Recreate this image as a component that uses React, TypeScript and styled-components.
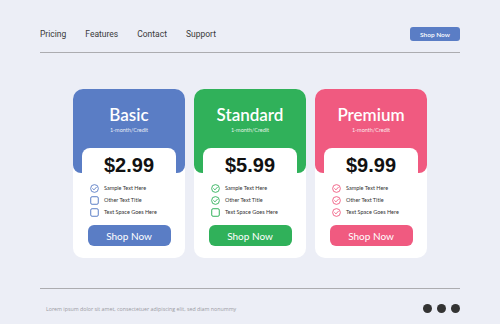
import React from "react";
import styled, { createGlobalStyle } from "styled-components";

const GlobalStyle = createGlobalStyle`
  body {
    margin: 0;
    background: #eceef6;
    font-family: "Liberation Sans", Arial, sans-serif;
  }
`;

const Page = styled.div`
  width: 420px;
  margin: 0 auto;
  padding-top: 27px;
  height: 324px;
  box-sizing: border-box;
`;

const Nav = styled.div`
  display: flex;
  align-items: center;
  justify-content: space-between;
  height: 14px;
`;

const Menu = styled.div`
  display: flex;
  gap: 19px;
`;

const MenuLink = styled.span`
  font-family: Roboto, sans-serif;
  font-size: 8.5px;
  color: #3a3a3a;
`;

const SmallButton = styled.div`
  width: 50px;
  height: 14px;
  background: #5a7dc5;
  border-radius: 3px;
  color: #fff;
  font-family: Lato, sans-serif;
  font-size: 6.5px;
  font-weight: 600;
  display: flex;
  align-items: center;
  justify-content: center;
`;

const Rule = styled.div<{ $top: number }>`
  height: 1px;
  background: #acacb0;
  margin-top: ${(p) => p.$top}px;
`;

const Cards = styled.div`
  display: flex;
  justify-content: center;
  gap: 9px;
  margin-top: 36px;
`;

const Card = styled.div`
  width: 112px;
  height: 169px;
  background: #fff;
  border-radius: 10px;
  overflow: hidden;
  display: flex;
  flex-direction: column;
  font-family: Lato, sans-serif;
`;

const Header = styled.div<{ $color: string }>`
  background: ${(p) => p.$color};
  border-radius: 0 0 8px 8px;
  padding: 16px 0 39px;
  text-align: center;
  color: #fff;
`;

const Title = styled.div`
  font-size: 17px;
  font-weight: 600;
  line-height: 20px;
`;

const Sub = styled.div`
  font-size: 5.5px;
  line-height: 7px;
  opacity: 0.85;
  margin-top: 2px;
`;

const Body = styled.div`
  background: #fff;
  margin: -25px 9px 0;
  border-radius: 8px 8px 0 0;
  padding-top: 5px;
  display: flex;
  flex-direction: column;
`;

const Price = styled.div`
  font-family: "Liberation Sans", Arial, sans-serif;
  font-weight: 700;
  font-size: 20px;
  line-height: 24px;
  text-align: center;
  color: #111;
`;

const List = styled.div`
  margin-top: 5px;
  padding-left: 8px;
`;

const Row = styled.div`
  display: flex;
  align-items: center;
  gap: 5px;
  height: 12px;
  font-size: 5.5px;
  color: #333;
`;

const Button = styled.div<{ $color: string }>`
  margin: 7px auto 0;
  width: 83px;
  height: 21px;
  border-radius: 6px;
  background: ${(p) => p.$color};
  color: #fff;
  font-size: 10px;
  display: flex;
  align-items: center;
  justify-content: center;
`;

const Footer = styled.div`
  display: flex;
  align-items: center;
  justify-content: space-between;
  margin-top: 15px;
  padding-left: 6px;
`;

const FooterText = styled.span`
  font-family: "Open Sans", sans-serif;
  font-size: 5.3px;
  color: #9a9aa2;
`;

const Dots = styled.div`
  display: flex;
  gap: 5px;
`;

const Dot = styled.span`
  width: 9px;
  height: 9px;
  border-radius: 50%;
  background: #333;
`;

const Icon = ({ checked, color }: { checked: boolean; color: string }) =>
  checked ? (
    <svg width="9" height="9" viewBox="0 0 10 10">
      <circle cx="5" cy="5" r="4.3" fill="none" stroke={color} strokeWidth="1" />
      <path d="M3 5.1 L4.4 6.5 L7.1 3.6" fill="none" stroke={color} strokeWidth="1" strokeLinecap="round" strokeLinejoin="round" />
    </svg>
  ) : (
    <svg width="9" height="9" viewBox="0 0 10 10">
      <rect x="0.8" y="0.8" width="8.4" height="8.4" rx="1.5" fill="none" stroke={color} strokeWidth="1.1" />
    </svg>
  );

const plans = [
  { name: "Basic", price: "$2.99", color: "#5a7dc5", checks: 1 },
  { name: "Standard", price: "$5.99", color: "#30b15a", checks: 2 },
  { name: "Premium", price: "$9.99", color: "#f05a80", checks: 3 },
];

const features = ["Sample Text Here", "Other Text Title", "Text Space Goes Here"];

export default function App() {
  return (
    <>
      <GlobalStyle />
      <Page>
        <Nav>
          <Menu>
            <MenuLink>Pricing</MenuLink>
            <MenuLink>Features</MenuLink>
            <MenuLink>Contact</MenuLink>
            <MenuLink>Support</MenuLink>
          </Menu>
          <SmallButton>Shop Now</SmallButton>
        </Nav>
        <Rule $top={11} />
        <Cards>
          {plans.map((plan) => (
            <Card key={plan.name}>
              <Header $color={plan.color}>
                <Title>{plan.name}</Title>
                <Sub>1-month/Credit</Sub>
              </Header>
              <Body>
                <Price>{plan.price}</Price>
                <List>
                  {features.map((f, i) => (
                    <Row key={f}>
                      <Icon checked={i < plan.checks} color={plan.color} />
                      {f}
                    </Row>
                  ))}
                </List>
                <Button $color={plan.color}>Shop Now</Button>
              </Body>
            </Card>
          ))}
        </Cards>
        <Rule $top={30} />
        <Footer>
          <FooterText>
            Lorem ipsum dolor sit amet, consectetuer adipiscing elit, sed diam nonummy
          </FooterText>
          <Dots>
            <Dot />
            <Dot />
            <Dot />
          </Dots>
        </Footer>
      </Page>
    </>
  );
}
